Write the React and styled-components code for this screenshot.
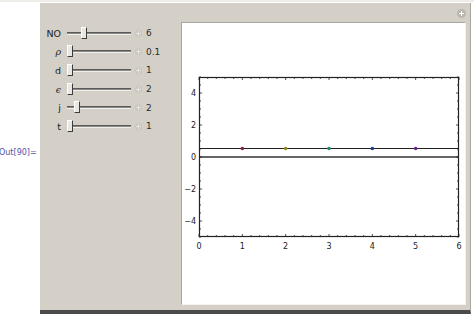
import styled, { createGlobalStyle } from "styled-components";

const Global = createGlobalStyle`
  html, body {
    margin: 0;
    padding: 0;
    background: #fff;
  }
  body {
    font-family: Tahoma, "DejaVu Sans", "Liberation Sans", sans-serif;
  }
`;

const Page = styled.div`
  display: flex;
  width: 474px;
  height: 314px;
  overflow: hidden;
  background: linear-gradient(#eeede9 0, #eeede9 2px, #fff 2px);
`;

const Gutter = styled.div`
  width: 40px;
  flex: none;
  position: relative;
`;

const OutLabel = styled.span`
  position: absolute;
  left: -1px;
  top: 148px;
  font-family: "DejaVu Sans", sans-serif;
  font-size: 8px;
  color: #5252a8;
  white-space: nowrap;
`;

const Panel = styled.div`
  margin-top: 3px;
  width: 431px;
  height: 311px;
  box-sizing: border-box;
  display: flex;
  background: #d4d0c8;
  border-right: 1px solid #a8a59e;
  border-bottom: 4px solid #4b4b4b;
  position: relative;
`;

const Controls = styled.div`
  width: 141px;
  flex: none;
  padding: 21px 0 0 0;
  display: flex;
  flex-direction: column;
`;

const Row = styled.div`
  display: flex;
  align-items: center;
  height: 18.6px;
  font-size: 9.5px;
  color: #222;
`;

const Label = styled.span`
  width: 21px;
  text-align: right;
  font-style: ${(p) => (p.$italic ? "italic" : "normal")};
  font-family: ${(p) => (p.$italic ? '"DejaVu Serif", serif' : "inherit")};
`;

const Track = styled.div`
  position: relative;
  margin-left: 6px;
  width: 64px;
  height: 3px;
  border-top: 1px solid #5a5a5a;
  background: #8c8a86;
  border-bottom: 1px solid #f0efeb;
  box-sizing: border-box;
`;

const Thumb = styled.div`
  position: absolute;
  top: -6px;
  width: 6px;
  height: 12px;
  box-sizing: border-box;
  background: #e9e7e1;
  border-left: 1px solid #fff;
  border-top: 1px solid #fff;
  border-right: 1px solid #3c3c3c;
  border-bottom: 1px solid #3c3c3c;
`;

const Plus = styled.span`
  width: 7px;
  height: 7px;
  margin-left: 4px;
  border-radius: 50%;
  background: #c9c6be;
  position: relative;
  &::before,
  &::after {
    content: "";
    position: absolute;
    background: #e6e4de;
  }
  &::before {
    left: 3px;
    top: 1px;
    width: 1px;
    height: 5px;
  }
  &::after {
    left: 1px;
    top: 3px;
    width: 5px;
    height: 1px;
  }
`;

const Value = styled.span`
  margin-left: 4px;
  font-family: "DejaVu Sans", sans-serif;
  font-size: 9px;
  color: #2a2a2a;
`;

const CornerButton = styled.span`
  position: absolute;
  top: 6px;
  right: 4px;
  width: 9px;
  height: 9px;
  border-radius: 50%;
  background: #b9b6ae;
  &::before,
  &::after {
    content: "";
    position: absolute;
    background: #fff;
  }
  &::before {
    left: 4px;
    top: 2px;
    width: 1px;
    height: 5px;
  }
  &::after {
    left: 2px;
    top: 4px;
    width: 5px;
    height: 1px;
  }
`;

const PlotArea = styled.div`
  margin-top: 19px;
  width: 285px;
  height: 283px;
  background: #fff;
  border-left: 1px solid #a9a6a0;
  border-top: 1px solid #a9a6a0;
  border-right: 1px solid #f4f3ef;
  border-bottom: 1px solid #f4f3ef;
  box-sizing: border-box;
`;

const sliders = [
  { label: "NO", value: "6", pos: 14 },
  { label: "ρ", value: "0.1", pos: 0, italic: true },
  { label: "d", value: "1", pos: 0 },
  { label: "ϵ", value: "2", pos: 0, italic: true },
  { label: "j", value: "2", pos: 7 },
  { label: "t", value: "1", pos: 0 },
];

const pointColors = ["#8a2040", "#8a8a20", "#208a6a", "#203a8a", "#6a208a"];

function Plot() {
  // frame in plot-area coords
  const x0 = 17, x1 = 277, y0 = 54, y1 = 214;
  const sx = (v) => x0 + ((x1 - x0) * v) / 6;
  const sy = (v) => y0 + ((y1 - y0) * (5 - v)) / 10;
  const lineY = sy(0) - 9;
  const xTicks = [];
  for (let i = 0; i <= 30; i++) {
    const v = i / 5;
    const major = i % 5 === 0;
    xTicks.push(
      <g key={"x" + i}>
        <line x1={sx(v)} x2={sx(v)} y1={y1} y2={y1 - (major ? 3 : 2)} stroke="#222" strokeWidth="0.8" />
        <line x1={sx(v)} x2={sx(v)} y1={y0} y2={y0 + (major ? 3 : 2)} stroke="#222" strokeWidth="0.8" />
      </g>
    );
  }
  const yTicks = [];
  for (let i = -10; i <= 10; i++) {
    const v = i / 2;
    const major = i % 4 === 0;
    yTicks.push(
      <g key={"y" + i}>
        <line x1={x0} x2={x0 + (major ? 3 : 2)} y1={sy(v)} y2={sy(v)} stroke="#222" strokeWidth="0.8" />
        <line x1={x1} x2={x1 - (major ? 3 : 2)} y1={sy(v)} y2={sy(v)} stroke="#222" strokeWidth="0.8" />
      </g>
    );
  }
  return (
    <svg width="283" height="281" style={{ display: "block" }}>
      <line x1={x0} x2={x1} y1={sy(0)} y2={sy(0)} stroke="#666" strokeWidth="2" />
      <line x1={x0} x2={x1} y1={lineY + 0.5} y2={lineY + 0.5} stroke="#222" strokeWidth="1" />
      {xTicks}
      {yTicks}
      <rect x={x0 + 0.5} y={y0 + 0.5} width={x1 - x0 - 1} height={y1 - y0 - 1} fill="none" stroke="#222" strokeWidth="1.2" />
      {pointColors.map((c, i) => (
        <circle key={c} cx={sx(i + 1)} cy={lineY + 0.5} r="1.8" fill={c} />
      ))}
      {[0, 1, 2, 3, 4, 5, 6].map((v) => (
        <text key={"xl" + v} x={sx(v)} y={y1 + 12} fontSize="8" fontFamily="DejaVu Sans, sans-serif" textAnchor="middle" fill="#222">
          {v}
        </text>
      ))}
      {[4, 2, 0, -2, -4].map((v) => (
        <text key={"yl" + v} x={x0 - 3} y={sy(v) + 3} fontSize="8" fontFamily="DejaVu Sans, sans-serif" textAnchor="end" fill="#222">
          {v < 0 ? "\u2212" + Math.abs(v) : v}
        </text>
      ))}
    </svg>
  );
}

export default function App() {
  return (
    <>
      <Global />
      <Page>
        <Gutter>
          <OutLabel>Out[90]=</OutLabel>
        </Gutter>
        <Panel>
          <Controls>
            {sliders.map((s) => (
              <Row key={s.label}>
                <Label $italic={s.italic}>{s.label}</Label>
                <Track>
                  <Thumb style={{ left: s.pos }} />
                </Track>
                <Plus />
                <Value>{s.value}</Value>
              </Row>
            ))}
          </Controls>
          <PlotArea>
            <Plot />
          </PlotArea>
          <CornerButton />
        </Panel>
      </Page>
    </>
  );
}
